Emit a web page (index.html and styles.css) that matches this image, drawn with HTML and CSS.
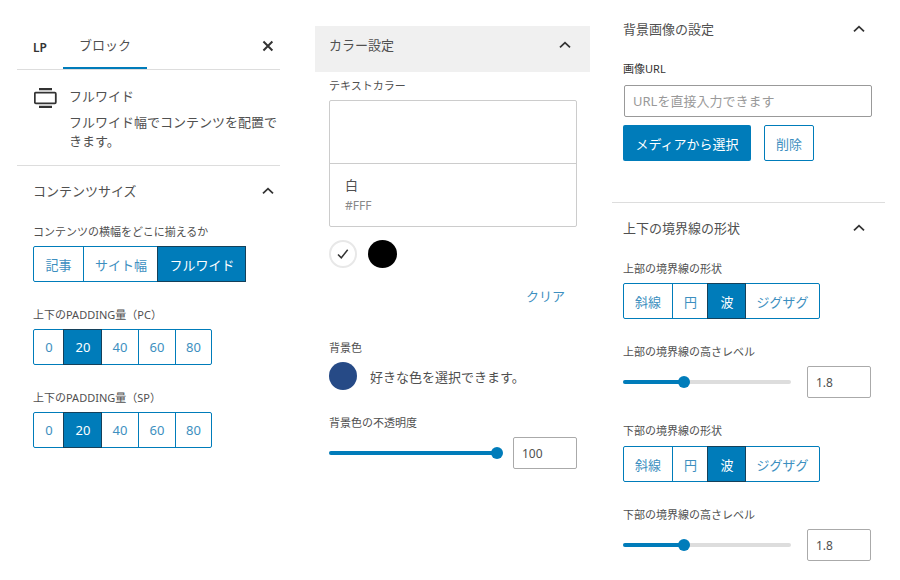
FILE: index.html
```html
<!DOCTYPE html>
<html lang="ja">
<head>
    <meta charset="UTF-8">
    <title>フルワイド ブロック設定</title>
    <link rel="stylesheet" href="styles.css">
</head>
<body>

    <!-- ブロック設定 -->
    <div class="panel panel-block">
        <div class="tabs">
            <span class="tab-lp">LP</span>
            <span class="tab-active">ブロック</span>
            <svg class="icon-close" width="24" height="24" viewBox="0 0 24 24"><path d="M7.5 7.5l9 9M16.5 7.5l-9 9"/></svg>
        </div>
        <div class="block-card">
            <svg class="block-icon" width="24" height="20" viewBox="0 0 24 20"><path d="M5 1.2h13M5 18.8h13" class="thick"/><rect x="0.8" y="4.7" width="21" height="10.6" rx="1"/></svg>
            <div>
                <div class="block-name">フルワイド</div>
                <p class="block-desc">フルワイド幅でコンテンツを配置できます。</p>
            </div>
        </div>
        <div class="section-head">
            <span>コンテンツサイズ</span>
            <svg class="chevron" width="24" height="24" viewBox="0 0 24 24"><path d="M7 14.3l5-4.6 5 4.6"/></svg>
        </div>
        <div class="field-label first-label">コンテンツの横幅をどこに揃えるか</div>
        <div class="btn-group">
            <span class="seg seg-w50">記事</span>
            <span class="seg seg-w75">サイト幅</span>
            <span class="seg seg-w88 on">フルワイド</span>
        </div>
        <div class="field-label small-gap">上下のPADDING量（PC）</div>
        <div class="btn-group">
            <span class="seg seg-w30">0</span>
            <span class="seg seg-w37 on">20</span>
            <span class="seg seg-w37">40</span>
            <span class="seg seg-w37">60</span>
            <span class="seg seg-w36">80</span>
        </div>
        <div class="field-label small-gap">上下のPADDING量（SP）</div>
        <div class="btn-group">
            <span class="seg seg-w30">0</span>
            <span class="seg seg-w37 on">20</span>
            <span class="seg seg-w37">40</span>
            <span class="seg seg-w37">60</span>
            <span class="seg seg-w36">80</span>
        </div>
    </div>

    <!-- カラー設定 -->
    <div class="panel panel-color">
        <div class="color-head">
            <span>カラー設定</span>
            <svg class="chevron" width="24" height="24" viewBox="0 0 24 24"><path d="M7 14.3l5-4.6 5 4.6"/></svg>
        </div>
        <div class="color-body">
            <div class="field-label">テキストカラー</div>
            <div class="color-card">
                <div class="color-preview"></div>
                <div class="color-info">
                    <div class="color-name">白</div>
                    <div class="color-code">#FFF</div>
                </div>
            </div>
            <div class="swatches">
                <span class="swatch swatch-white">
                    <svg width="16" height="16" viewBox="0 0 16 16"><path d="M3 8.5l3.3 3.3 6.4-8"/></svg>
                </span>
                <span class="swatch swatch-black"></span>
            </div>
            <div class="clear-row"><span class="clear-link">クリア</span></div>
            <div class="field-label bg-label">背景色</div>
            <div class="bg-row">
                <span class="swatch swatch-navy"></span>
                <span class="bg-hint">好きな色を選択できます。</span>
            </div>
            <div class="field-label opacity-label">背景色の不透明度</div>
            <div class="range-row">
                <div class="range"><div class="range-fill" style="width: 100%"></div><span class="range-thumb" style="left: 100%"></span></div>
                <div class="num-input">100</div>
            </div>
        </div>
    </div>

    <!-- 背景画像・境界線 -->
    <div class="panel panel-image">
        <div class="image-section">
            <div class="section-head image-head">
                <span>背景画像の設定</span>
                <svg class="chevron" width="24" height="24" viewBox="0 0 24 24"><path d="M7 14.3l5-4.6 5 4.6"/></svg>
            </div>
            <div class="field-label url-label">画像URL</div>
            <div class="url-input">URLを直接入力できます</div>
            <div class="media-row">
                <span class="btn-primary">メディアから選択</span>
                <span class="btn-outline">削除</span>
            </div>
        </div>
        <div class="border-section">
            <div class="section-head border-head">
                <span>上下の境界線の形状</span>
                <svg class="chevron" width="24" height="24" viewBox="0 0 24 24"><path d="M7 14.3l5-4.6 5 4.6"/></svg>
            </div>
            <div class="field-label shape-label">上部の境界線の形状</div>
            <div class="btn-group">
                <span class="seg seg-w49">斜線</span>
                <span class="seg seg-w36">円</span>
                <span class="seg seg-w37 on">波</span>
                <span class="seg seg-w74">ジグザグ</span>
            </div>
            <div class="field-label height-label">上部の境界線の高さレベル</div>
            <div class="range-row range-row-wide">
                <div class="range"><div class="range-fill" style="width: 36.5%"></div><span class="range-thumb" style="left: 36.5%"></span></div>
                <div class="num-input">1.8</div>
            </div>
            <div class="field-label shape-label-2">下部の境界線の形状</div>
            <div class="btn-group">
                <span class="seg seg-w49">斜線</span>
                <span class="seg seg-w36">円</span>
                <span class="seg seg-w37 on">波</span>
                <span class="seg seg-w74">ジグザグ</span>
            </div>
            <div class="field-label height-label">下部の境界線の高さレベル</div>
            <div class="range-row range-row-wide">
                <div class="range"><div class="range-fill" style="width: 36.5%"></div><span class="range-thumb" style="left: 36.5%"></span></div>
                <div class="num-input">1.8</div>
            </div>
        </div>
    </div>

</body>
</html>
```

FILE: styles.css
```css
body {
    margin: 0;
    background-color: #fff;
    color: #505050;
    font-family: "Noto Sans", "Noto Sans CJK JP", sans-serif;
    font-size: 13px;
    display: flex;
    align-items: flex-start;
    height: 580px;
    overflow: hidden;
}

svg {
    fill: none;
    stroke: #333;
    stroke-width: 1.8;
    display: block;
}

.panel-block {
    width: 263px;
    margin-left: 17px;
}

.panel-color {
    width: 275px;
    margin-left: 35px;
    margin-top: 26px;
}

.panel-image {
    width: 273px;
    margin-left: 22px;
}

/* タブ */
.tabs {
    display: flex;
    align-items: flex-start;
    height: 69px;
    border-bottom: 1px solid #ddd;
}

.tab-lp {
    width: 30px;
    margin-left: 16px;
    padding-top: 38px;
    font-size: 12px;
    font-weight: 600;
    line-height: 20px;
    color: #333;
}

.tab-active {
    width: 85px;
    height: 69px;
    box-sizing: border-box;
    padding-top: 35px;
    text-align: center;
    font-size: 13px;
    line-height: 20px;
    border-bottom: 2px solid #007cba;
}

.icon-close {
    margin-left: 109px;
    margin-top: 34px;
    stroke-width: 2;
}

/* ブロック情報 */
.block-card {
    display: flex;
    height: 95px;
    border-bottom: 1px solid #ddd;
    padding-left: 17px;
}

.block-icon {
    margin-top: 18px;
    margin-right: 11px;
    flex-shrink: 0;
}

.block-icon .thick {
    stroke-width: 2.2;
}

.block-name {
    margin-top: 17px;
    line-height: 19px;
}

.block-desc {
    margin: 7px 0 0;
    width: 212px;
    line-height: 19px;
}

.section-head {
    display: flex;
    justify-content: space-between;
    align-items: center;
    height: 50px;
    padding: 0 0 0 16px;
}

.section-head span,
.color-head span {
    margin-top: -2px;
}

.field-label {
    font-size: 11px;
    line-height: 16px;
    padding-top: 1px;
    margin-bottom: -1px;
}

.panel-block .field-label {
    margin-left: 16px;
}

.first-label {
    margin-top: 7px;
}

.small-gap {
    margin-top: 24px;
}

/* ボタングループ */
.btn-group {
    display: inline-flex;
    box-sizing: border-box;
    height: 36px;
    border: 1px solid #007cba;
    border-radius: 2px;
    vertical-align: top;
    margin-top: 7px;
}

.panel-block .btn-group {
    margin-left: 16px;
}

.seg {
    box-sizing: border-box;
    display: flex;
    align-items: center;
    justify-content: center;
    border-left: 1px solid #007cba;
    color: #3d8fc0;
    font-size: 13px;
    height: 34px;
}

.seg:first-child {
    border-left: none;
}

.seg.on {
    background-color: #007cba;
    color: #fff;
    box-shadow: 0 0 0 1px #14405a;
    position: relative;
}

.seg-w30 { width: 30px; }
.seg-w36 { width: 36px; }
.seg-w37 { width: 37px; }
.seg-w49 { width: 48px; }
.seg-w50 { width: 49px; }
.seg-w74 { width: 74px; }
.seg-w75 { width: 75px; }
.seg-w88 { width: 87px; }

/* カラー設定 */
.color-head {
    display: flex;
    justify-content: space-between;
    align-items: center;
    box-sizing: border-box;
    height: 46px;
    padding: 0 13px 8px 14px;
    background-color: #f0f0f0;
}

.color-body {
    padding: 0 13px 0 14px;
}

.color-body .field-label:first-child {
    margin-top: 5px;
}

.color-card {
    margin-top: 7px;
    border: 1px solid #ccc;
    border-radius: 2px;
    height: 127px;
    box-sizing: border-box;
}

.color-preview {
    height: 62px;
    border-bottom: 1px solid #ccc;
}

.color-info {
    padding: 11px 0 0 15px;
}

.color-name {
    font-size: 13px;
    line-height: 20px;
}

.color-code {
    margin-top: 3px;
    font-size: 12px;
    line-height: 16px;
    color: #888;
}

.swatches {
    display: flex;
    gap: 11px;
    margin-top: 13px;
}

.swatch {
    width: 28px;
    height: 28px;
    border-radius: 50%;
    display: flex;
    align-items: center;
    justify-content: center;
    flex-shrink: 0;
}

.swatch-white {
    background-color: #fff;
    box-sizing: border-box;
    border: 2px solid #e8e8e8;
}

.swatch-white svg {
    stroke-width: 1.5;
}

.swatch-black {
    background-color: #000;
    width: 29px;
}

.swatch-navy {
    background-color: #264a86;
}

.clear-row {
    display: flex;
    justify-content: flex-end;
    margin-top: 18px;
    padding-right: 12px;
}

.clear-link {
    color: #3d8fc0;
    font-size: 13px;
    line-height: 20px;
}

.bg-label {
    margin-top: 33px;
}

.bg-row {
    display: flex;
    align-items: center;
    gap: 13px;
    margin-top: 7px;
}

.opacity-label {
    margin-top: 24px;
}

.range-row {
    display: flex;
    align-items: center;
    margin-top: 7px;
    width: 248px;
    justify-content: space-between;
}

.range {
    position: relative;
    width: 168px;
    height: 4px;
    background-color: #ddd;
    border-radius: 2px;
}

.range-fill {
    height: 4px;
    background-color: #007cba;
    border-radius: 2px;
}

.range-thumb {
    position: absolute;
    top: -4px;
    width: 12px;
    height: 12px;
    margin-left: -6px;
    border-radius: 50%;
    background-color: #007cba;
}

.num-input {
    box-sizing: border-box;
    width: 64px;
    height: 32px;
    border: 1px solid #aaa;
    border-radius: 2px;
    padding-left: 8px;
    font-size: 12px;
    line-height: 32px;
}

/* 背景画像 */
.image-section {
    height: 202px;
    border-bottom: 1px solid #ddd;
    padding-left: 11px;
}

.image-head {
    padding: 0 14px 0 0;
    height: 58px;
}

.url-label {
    margin-top: 2px;
    color: #333;
}

.url-input {
    box-sizing: border-box;
    width: 248px;
    height: 32px;
    margin-top: 9px;
    margin-left: 1px;
    border: 1px solid #999;
    border-radius: 2px;
    padding-left: 8px;
    font-size: 13px;
    line-height: 30px;
    color: #999;
}

.media-row {
    display: flex;
    margin-top: 8px;
    gap: 13px;
}

.btn-primary {
    width: 128px;
    height: 36px;
    background-color: #007cba;
    color: #fff;
    border-radius: 2px;
    display: flex;
    align-items: center;
    justify-content: center;
}

.btn-outline {
    box-sizing: border-box;
    width: 50px;
    height: 36px;
    border: 1px solid #007cba;
    border-radius: 2px;
    color: #3d8fc0;
    display: flex;
    align-items: center;
    justify-content: center;
}

/* 境界線 */
.border-section {
    padding-left: 11px;
}

.border-head {
    padding: 0 14px 0 0;
    height: 50px;
}

.shape-label {
    margin-top: 7px;
}

.height-label {
    margin-top: 24px;
}

.shape-label-2 {
    margin-top: 24px;
    margin-bottom: 0;
}
```
